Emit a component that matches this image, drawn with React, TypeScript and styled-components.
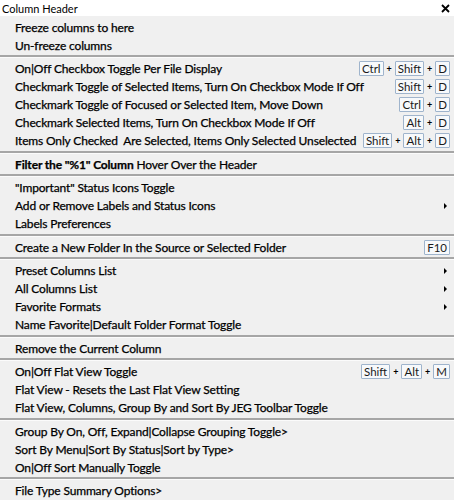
import React from 'react';
import styled, { createGlobalStyle } from 'styled-components';

const Global = createGlobalStyle`
  html, body {
    margin: 0;
    padding: 0;
    background: #f0f0f0;
  }
  body {
    font-family: Lato, "Noto Sans", "Liberation Sans", sans-serif;
  }
`;

const Window = styled.div`
  width: 454px;
  height: 500px;
  overflow: hidden;
  background: #f0f0f0;
  color: #000;
`;

const TitleBar = styled.div`
  height: 16px;
  background: #fff;
  display: flex;
  align-items: center;
  justify-content: space-between;
  padding: 0 4px 0 2px;
  font-size: 11px;
`;

const Close = styled.svg`
  width: 9px;
  height: 9px;
`;

const Menu = styled.div`
  padding-top: 2px;
  display: flex;
  flex-direction: column;
`;

const Row = styled.div`
  height: 18px;
  display: flex;
  align-items: center;
  justify-content: space-between;
  padding: 0 4px 0 15px;
  font-size: 12px;
  letter-spacing: -0.15px;
  white-space: pre;
  -webkit-text-stroke: 0.25px #000;
`;

const Label = styled.span`
  b {
    font-weight: 700;
  }
`;

const Separator = styled.div`
  height: 5.5px;
  display: flex;
  flex-direction: column;
  justify-content: center;
  &::before {
    content: '';
    display: block;
    height: 2px;
    background: #a6a6a6;
  }
  &::after {
    content: '';
    display: block;
    height: 1px;
    background: #fbfbfb;
  }
`;

const Keys = styled.span`
  display: flex;
  align-items: center;
  letter-spacing: 0;
  -webkit-text-stroke: 0;
`;

const Key = styled.span`
  height: 13px;
  line-height: 13px;
  padding: 0 2px;
  border: 1px solid #9fb4cc;
  border-radius: 1px;
  background: #f7f9fb;
  font-size: 11.5px;
  color: #1a1a1a;
`;

const Plus = styled.span`
  font-size: 9px;
  font-weight: 700;
  margin: 0 3px;
`;

const Arrow = styled.span`
  width: 0;
  height: 0;
  margin-right: 3px;
  border-top: 3px solid transparent;
  border-bottom: 3px solid transparent;
  border-left: 3px solid #000;
`;

type Item = {
  label: React.ReactNode;
  keys?: string[];
  sub?: boolean;
};

const groups: Item[][] = [
  [{ label: 'Freeze columns to here' }, { label: 'Un-freeze columns' }],
  [
    { label: 'On|Off Checkbox Toggle Per File Display', keys: ['Ctrl', 'Shift', 'D'] },
    { label: 'Checkmark Toggle of Selected Items, Turn On Checkbox Mode If Off', keys: ['Shift', 'D'] },
    { label: 'Checkmark Toggle of Focused or Selected Item, Move Down', keys: ['Ctrl', 'D'] },
    { label: 'Checkmark Selected Items, Turn On Checkbox Mode If Off', keys: ['Alt', 'D'] },
    { label: 'Items Only Checked  Are Selected, Items Only Selected Unselected', keys: ['Shift', 'Alt', 'D'] },
  ],
  [
    {
      label: (
        <>
          <b>Filter the "%1" Column</b> Hover Over the Header
        </>
      ),
    },
  ],
  [
    { label: '"Important" Status Icons Toggle' },
    { label: 'Add or Remove Labels and Status Icons', sub: true },
    { label: 'Labels Preferences' },
  ],
  [{ label: 'Create a New Folder In the Source or Selected Folder', keys: ['F10'] }],
  [
    { label: 'Preset Columns List', sub: true },
    { label: 'All Columns List', sub: true },
    { label: 'Favorite Formats', sub: true },
    { label: 'Name Favorite|Default Folder Format Toggle' },
  ],
  [{ label: 'Remove the Current Column' }],
  [
    { label: 'On|Off Flat View Toggle', keys: ['Shift', 'Alt', 'M'] },
    { label: 'Flat View - Resets the Last Flat View Setting' },
    { label: 'Flat View, Columns, Group By and Sort By JEG Toolbar Toggle' },
  ],
  [
    { label: 'Group By On, Off, Expand|Collapse Grouping Toggle>' },
    { label: 'Sort By Menu|Sort By Status|Sort by Type>' },
    { label: 'On|Off Sort Manually Toggle' },
  ],
  [{ label: 'File Type Summary Options>' }],
];

function Shortcut({ keys }: { keys: string[] }) {
  return (
    <Keys>
      {keys.map((k, i) => (
        <React.Fragment key={k}>
          {i > 0 && <Plus>+</Plus>}
          <Key>{k}</Key>
        </React.Fragment>
      ))}
    </Keys>
  );
}

export default function App() {
  return (
    <Window>
      <Global />
      <TitleBar>
        <span>Column Header</span>
        <Close viewBox="0 0 9 9">
          <path d="M1 1L8 8M8 1L1 8" stroke="#000" strokeWidth="1.8" />
        </Close>
      </TitleBar>
      <Menu>
        {groups.map((group, gi) => (
          <React.Fragment key={gi}>
            {gi > 0 && <Separator />}
            {group.map((item, ii) => (
              <Row key={ii}>
                <Label>{item.label}</Label>
                {item.keys && <Shortcut keys={item.keys} />}
                {item.sub && <Arrow />}
              </Row>
            ))}
          </React.Fragment>
        ))}
      </Menu>
    </Window>
  );
}
